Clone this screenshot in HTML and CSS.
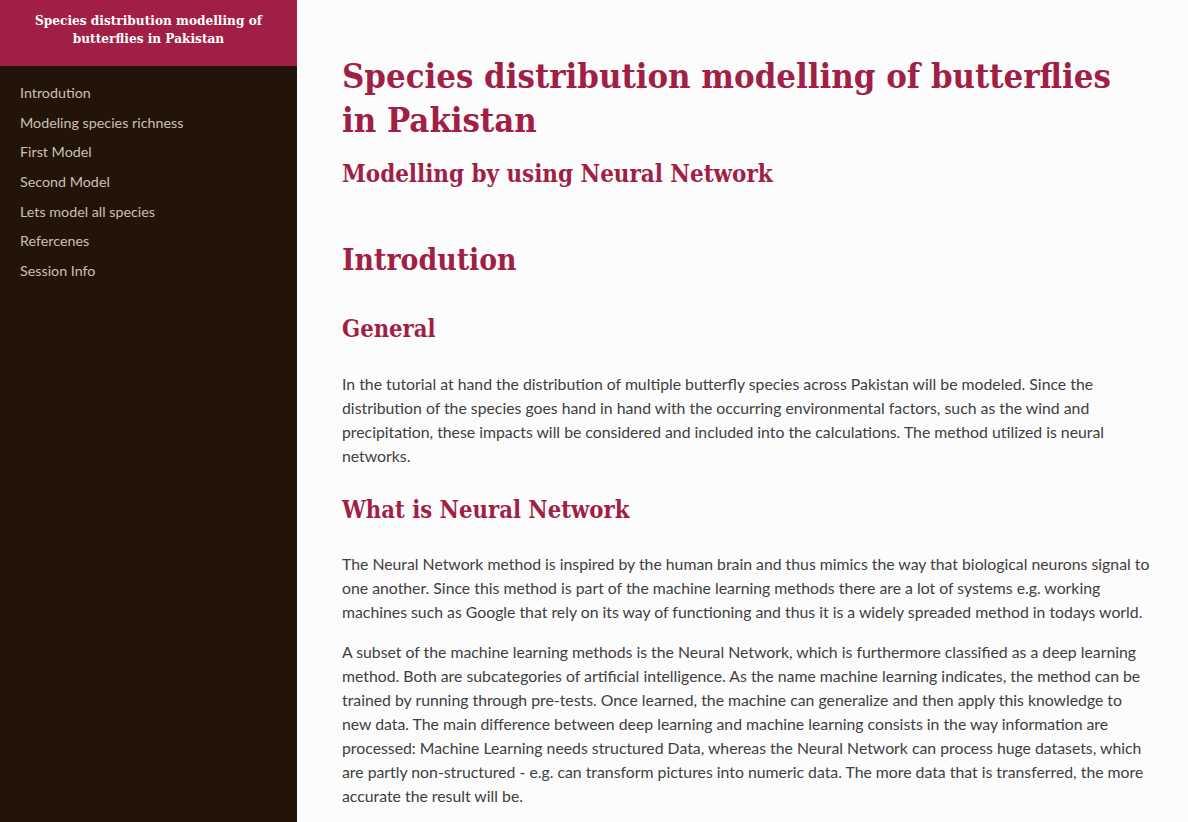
FILE: index.html
```html
<!DOCTYPE html>
<html lang="en">
<head>
<meta charset="utf-8">
<title>Species distribution modelling of butterflies in Pakistan</title>
<link rel="stylesheet" href="styles.css">
</head>
<body>
<div class="page">
  <nav class="sidebar">
    <div class="sidebar-head">Species distribution modelling of butterflies in Pakistan</div>
    <ul class="toc">
      <li><a href="#intro">Introdution</a></li>
      <li><a href="#">Modeling species richness</a></li>
      <li><a href="#">First Model</a></li>
      <li><a href="#">Second Model</a></li>
      <li><a href="#">Lets model all species</a></li>
      <li><a href="#">Refercenes</a></li>
      <li><a href="#">Session Info</a></li>
    </ul>
  </nav>
  <main class="content">
    <h1 class="title">Species distribution modelling of butterflies in Pakistan</h1>
    <h2 class="subtitle">Modelling by using Neural Network</h2>
    <h1 class="section" id="intro">Introdution</h1>
    <h2 class="sub">General</h2>
    <p>In the tutorial at hand the distribution of multiple butterfly species across Pakistan will be modeled. Since the distribution of the species goes hand in hand with the occurring environmental factors, such as the wind and precipitation, these impacts will be considered and included into the calculations. The method utilized is neural networks.</p>
    <h2 class="sub">What is Neural Network</h2>
    <p>The Neural Network method is inspired by the human brain and thus mimics the way that biological neurons signal to one another. Since this method is part of the machine learning methods there are a lot of systems e.g. working machines such as Google that rely on its way of functioning and thus it is a widely spreaded method in todays world.</p>
    <p>A subset of the machine learning methods is the Neural Network, which is furthermore classified as a deep learning method. Both are subcategories of artificial intelligence. As the name machine learning indicates, the method can be trained by running through pre-tests. Once learned, the machine can generalize and then apply this knowledge to new data. The main difference between deep learning and machine learning consists in the way information are processed: Machine Learning needs structured Data, whereas the Neural Network can process huge datasets, which are partly non-structured - e.g. can transform pictures into numeric data. The more data that is transferred, the more accurate the result will be.</p>
  </main>
</div>
</body>
</html>
```
FILE: styles.css
```css
html, body {
  margin: 0;
  padding: 0;
  height: 100%;
  overflow: hidden;
}
body {
  background: #fcfcfc;
  font-family: Lato, "Open Sans", sans-serif;
  color: #404040;
}
.page {
  display: flex;
  height: 822px;
}
.sidebar {
  width: 297px;
  flex: 0 0 297px;
  background: #231409;
}
.sidebar-head {
  background: #a11f45;
  color: #ffffff;
  font-family: "DejaVu Serif", serif;
  font-stretch: condensed;
  font-weight: bold;
  font-size: 13.5px;
  line-height: 18px;
  text-align: center;
  height: 66px;
  box-sizing: border-box;
  padding: 11px 20px 0;
}
.toc {
  list-style: none;
  margin: 0;
  padding: 13px 0 0 20px;
}
.toc li {
  height: 29.7px;
  line-height: 26px;
}
.toc a {
  color: #c9c0b3;
  text-decoration: none;
  font-size: 14.3px;
}
.content {
  flex: 1;
  padding: 54px 34px 0 45px;
  box-sizing: border-box;
}
h1, h2 {
  font-family: "DejaVu Serif", serif;
  font-stretch: condensed;
  font-weight: bold;
  color: #a11f45;
  margin: 0;
}
.title {
  font-size: 34.4px;
  line-height: 44px;
}
.subtitle {
  font-size: 23.9px;
  line-height: 32px;
  margin-top: 16px;
}
.section {
  font-size: 29.8px;
  line-height: 40px;
  margin-top: 50px;
}
.sub {
  font-size: 23.6px;
  line-height: 32px;
  margin-top: 33px;
}
p {
  font-size: 15.8px;
  line-height: 24px;
  margin: 0 0 16px;
}
.sub + p {
  margin-top: 27px;
}
p + .sub {
  margin-top: 26px;
}
.content > p + .sub + p {
  margin-top: 26px;
}
```
